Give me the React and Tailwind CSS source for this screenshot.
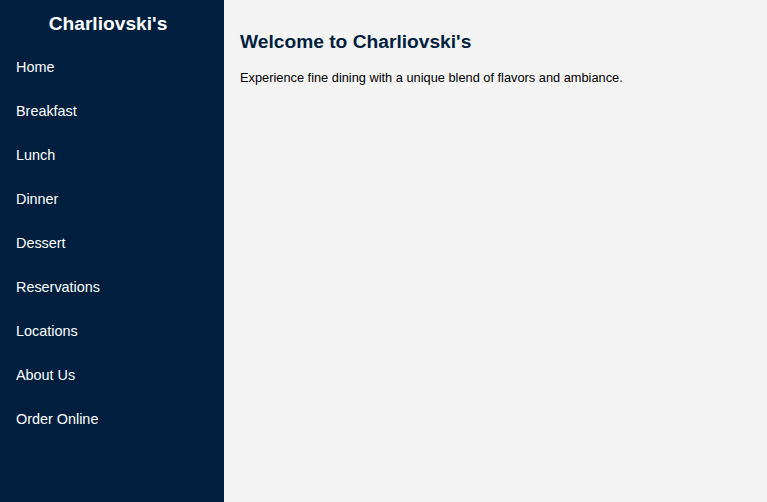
const links = ['Home', 'Breakfast', 'Lunch', 'Dinner', 'Dessert', 'Reservations', 'Locations', 'About Us', 'Order Online'];

export default function App() {
  return (
    <div className="flex min-h-screen bg-[#f4f4f4]" style={{ fontFamily: '"Liberation Sans", Arial, sans-serif' }}>
      {/* Sidebar */}
      <aside className="w-[224px] shrink-0 bg-[#001f3f] text-white">
        <h1 className="pr-[8px] pt-[13px] text-center text-[19.2px] font-bold leading-[22px]">Charliovski's</h1>
        <nav className="mt-[10px] flex flex-col">
          {links.map((l) => (
            <a key={l} href="#" className="px-4 py-3 text-[14.4px] leading-[20px] text-white">
              {l}
            </a>
          ))}
        </nav>
      </aside>

      {/* Main */}
      <main className="flex-1 px-4 pt-[31px]">
        <h2 className="text-[19.2px] font-bold leading-[22px] text-[#001f3f]">Welcome to Charliovski's</h2>
        <p className="mt-[17px] text-[12.8px] leading-[16px] text-black">
          Experience fine dining with a unique blend of flavors and ambiance.
        </p>
      </main>
    </div>
  );
}
